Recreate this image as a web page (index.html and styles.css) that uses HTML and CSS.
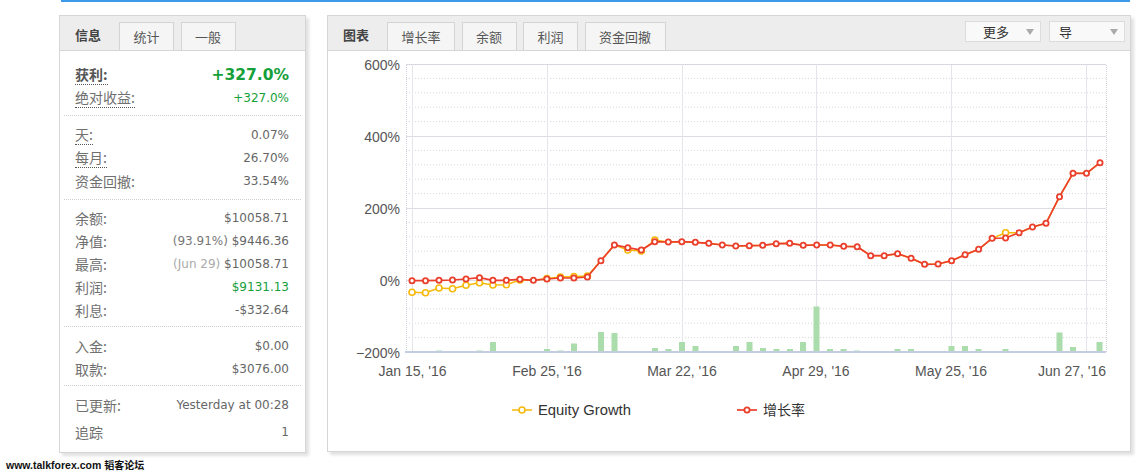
FILE: index.html
```html
<!DOCTYPE html>
<html>
<head>
<meta charset="utf-8">
<link rel="stylesheet" href="styles.css">
</head>
<body>
<div class="topbar"></div>
<div class="main">
  <section class="panel info">
    <div class="phead">
      <div class="tab active">信息</div>
      <div class="tab">统计</div>
      <div class="tab">一般</div>
    </div>
    <div class="pbody">
      <div class="grp g1">
        <div class="row"><span class="lbl ul strong">获利:</span><span class="val green bigval">+327.0%</span></div>
        <div class="row"><span class="lbl ul">绝对收益:</span><span class="val green">+327.0%</span></div>
      </div>
      <div class="sep"></div>
      <div class="grp g2">
        <div class="row"><span class="lbl ul">天:</span><span class="val">0.07%</span></div>
        <div class="row"><span class="lbl ul">每月:</span><span class="val">26.70%</span></div>
        <div class="row"><span class="lbl">资金回撤:</span><span class="val">33.54%</span></div>
      </div>
      <div class="sep"></div>
      <div class="grp g3">
        <div class="row"><span class="lbl">余额:</span><span class="val">$10058.71</span></div>
        <div class="row"><span class="lbl">净值:</span><span class="val"><span class="muted">(93.91%)</span> $9446.36</span></div>
        <div class="row"><span class="lbl">最高:</span><span class="val"><span class="faint">(Jun 29)</span> $10058.71</span></div>
        <div class="row"><span class="lbl">利润:</span><span class="val green">$9131.13</span></div>
        <div class="row"><span class="lbl">利息:</span><span class="val">-$332.64</span></div>
      </div>
      <div class="sep"></div>
      <div class="grp g4">
        <div class="row"><span class="lbl">入金:</span><span class="val">$0.00</span></div>
        <div class="row"><span class="lbl">取款:</span><span class="val">$3076.00</span></div>
      </div>
      <div class="sep"></div>
      <div class="grp g5">
        <div class="row"><span class="lbl">已更新:</span><span class="val">Yesterday at 00:28</span></div>
        <div class="row last"><span class="lbl">追踪</span><span class="val">1</span></div>
      </div>
    </div>
  </section>

  <section class="panel chart">
    <div class="phead">
      <div class="tab active">图表</div>
      <div class="tab">增长率</div>
      <div class="tab">余额</div>
      <div class="tab">利润</div>
      <div class="tab">资金回撤</div>
      <div class="tools">
        <div class="dd dd-more">更多<i class="caret"></i></div>
        <div class="dd dd-exp">导<i class="caret"></i></div>
      </div>
    </div>
    <div class="pbody">
      <svg class="plot" width="802" height="400" viewBox="0 0 802 400" xmlns="http://www.w3.org/2000/svg">
        <g transform="translate(-328 -51)">
          <path class="minor" d="M406 78.4H1106M406 92.8H1106M406 107.2H1106M406 121.6H1106M406 150.4H1106M406 164.8H1106M406 179.2H1106M406 193.6H1106M406 222.4H1106M406 236.8H1106M406 251.2H1106M406 265.6H1106M406 294.4H1106M406 308.8H1106M406 323.2H1106M406 337.6H1106"/>
          <path class="major" d="M406 64.5H1106M406 136.5H1106M406 208.5H1106M406 280.5H1106"/>
          <path class="vgrid" d="M412.5 64V352M547.5 64V352M682.5 64V352M816.5 64V352M951.5 64V352M1086.5 64V352"/>
          <path class="frame" d="M406.5 352V64.5H1106.5V352"/>
          <g class="bars">
            <rect x="436" y="350.5" width="6" height="1.5"/>
            <rect x="476.5" y="350.5" width="6" height="1.5"/>
            <rect x="490" y="342" width="6" height="10"/>
            <rect x="544" y="349" width="6" height="3"/>
            <rect x="557.5" y="350.5" width="6" height="1.5"/>
            <rect x="571" y="343.5" width="6" height="8.5"/>
            <rect x="598" y="332" width="6" height="20"/>
            <rect x="611.5" y="333" width="6" height="19"/>
            <rect x="652" y="348" width="6" height="4"/>
            <rect x="665.5" y="349" width="6" height="3"/>
            <rect x="679" y="342" width="6" height="10"/>
            <rect x="692.5" y="346" width="6" height="6"/>
            <rect x="733" y="346" width="6" height="6"/>
            <rect x="746.5" y="342" width="6" height="10"/>
            <rect x="760" y="348" width="6" height="4"/>
            <rect x="773.5" y="349" width="6" height="3"/>
            <rect x="787" y="349" width="6" height="3"/>
            <rect x="800" y="342" width="6" height="10"/>
            <rect x="813.5" y="306.5" width="6" height="45.5"/>
            <rect x="827" y="349" width="6" height="3"/>
            <rect x="840.5" y="349" width="6" height="3"/>
            <rect x="854" y="350.5" width="6" height="1.5"/>
            <rect x="894.5" y="349" width="6" height="3"/>
            <rect x="908" y="349" width="6" height="3"/>
            <rect x="948.5" y="346" width="6" height="6"/>
            <rect x="962" y="346" width="6" height="6"/>
            <rect x="975.5" y="349" width="6" height="3"/>
            <rect x="1002.5" y="349" width="6" height="3"/>
            <rect x="1056.5" y="332.5" width="6" height="19.5"/>
            <rect x="1070" y="347" width="6" height="5"/>
            <rect x="1096.5" y="342" width="6" height="10"/>
          </g>
          <path class="baseline" d="M405 352H1106"/>
          <g class="ylab">
            <text x="400" y="70">600%</text>
            <text x="400" y="142">400%</text>
            <text x="400" y="214">200%</text>
            <text x="400" y="286">0%</text>
            <text x="400" y="358">−200%</text>
          </g>
          <g class="xlab">
            <text x="412.5" y="376">Jan 15, '16</text>
            <text x="547" y="376">Feb 25, '16</text>
            <text x="682" y="376">Mar 22, '16</text>
            <text x="816" y="376">Apr 29, '16</text>
            <text x="951" y="376">May 25, '16</text>
            <text class="end" x="1106" y="376">Jun 27, '16</text>
          </g>
          <polyline class="eqline" points="412,292.3 425.5,292.7 439,288 452.5,288.7 466,285.3 479.5,282.7 492.9,285 506.4,284.7 519.9,280 533.4,280.3 546.9,278.5 560.4,277 573.9,276.5 587.4,276 600.9,260.7 614.4,245 627.8,250 641.3,251 654.8,240 668.3,242 681.8,241.7 695.3,242.3 708.8,243.3 722.3,245 735.8,246 749.3,245.7 762.7,245.3 776.2,243.7 789.7,243.3 803.2,245.3 816.7,245 830.2,245 843.7,246.3 857.2,246.7 870.7,255.7 884.2,255.7 897.6,253.7 911.1,258.3 924.6,264.3 938.1,264 951.6,260.7 965.1,254.7 978.6,249.3 992.1,238.3 1005.6,232.7 1019.1,232.7 1032.5,227 1046,223.3 1059.5,196.7 1073,173.3 1086.5,173.3 1100,162.7"/>
          <g class="eqdots">
            <circle cx="412" cy="292.3" r="3"/><circle cx="425.5" cy="292.7" r="3"/><circle cx="439" cy="288" r="3"/><circle cx="452.5" cy="288.7" r="3"/><circle cx="466" cy="285.3" r="3"/><circle cx="479.5" cy="282.7" r="3"/><circle cx="492.9" cy="285" r="3"/><circle cx="506.4" cy="284.7" r="3"/><circle cx="519.9" cy="280" r="3"/><circle cx="546.9" cy="278.5" r="3"/><circle cx="560.4" cy="277" r="3"/><circle cx="573.9" cy="276.5" r="3"/><circle cx="587.4" cy="276" r="3"/><circle cx="627.8" cy="250" r="3"/><circle cx="641.3" cy="251" r="3"/><circle cx="654.8" cy="240" r="3"/><circle cx="1005.6" cy="232.7" r="3"/>
          </g>
          <polyline class="grline" points="412,280.7 425.5,280.7 439,280.3 452.5,280 466,279 479.5,277.7 492.9,280.3 506.4,280.3 519.9,279.3 533.4,280.3 546.9,279 560.4,278 573.9,278 587.4,277 600.9,260.7 614.4,245 627.8,247.7 641.3,250 654.8,241.7 668.3,242 681.8,241.7 695.3,242.3 708.8,243.3 722.3,245 735.8,246 749.3,245.7 762.7,245.3 776.2,243.7 789.7,243.3 803.2,245.3 816.7,245 830.2,245 843.7,246.3 857.2,246.7 870.7,255.7 884.2,255.7 897.6,253.7 911.1,258.3 924.6,264.3 938.1,264 951.6,260.7 965.1,254.7 978.6,249.3 992.1,238.3 1005.6,238 1019.1,232.7 1032.5,227 1046,223.3 1059.5,196.7 1073,173.3 1086.5,173.3 1100,162.7"/>
          <g class="grdots">
            <circle cx="412" cy="280.7" r="2.6"/><circle cx="425.5" cy="280.7" r="2.6"/><circle cx="439" cy="280.3" r="2.6"/><circle cx="452.5" cy="280" r="2.6"/><circle cx="466" cy="279" r="2.6"/><circle cx="479.5" cy="277.7" r="2.6"/><circle cx="492.9" cy="280.3" r="2.6"/><circle cx="506.4" cy="280.3" r="2.6"/><circle cx="519.9" cy="279.3" r="2.6"/><circle cx="533.4" cy="280.3" r="2.6"/><circle cx="546.9" cy="279" r="2.6"/><circle cx="560.4" cy="278" r="2.6"/><circle cx="573.9" cy="278" r="2.6"/><circle cx="587.4" cy="277" r="2.6"/><circle cx="600.9" cy="260.7" r="2.6"/><circle cx="614.4" cy="245" r="2.6"/><circle cx="627.8" cy="247.7" r="2.6"/><circle cx="641.3" cy="250" r="2.6"/><circle cx="654.8" cy="241.7" r="2.6"/><circle cx="668.3" cy="242" r="2.6"/><circle cx="681.8" cy="241.7" r="2.6"/><circle cx="695.3" cy="242.3" r="2.6"/><circle cx="708.8" cy="243.3" r="2.6"/><circle cx="722.3" cy="245" r="2.6"/><circle cx="735.8" cy="246" r="2.6"/><circle cx="749.3" cy="245.7" r="2.6"/><circle cx="762.7" cy="245.3" r="2.6"/><circle cx="776.2" cy="243.7" r="2.6"/><circle cx="789.7" cy="243.3" r="2.6"/><circle cx="803.2" cy="245.3" r="2.6"/><circle cx="816.7" cy="245" r="2.6"/><circle cx="830.2" cy="245" r="2.6"/><circle cx="843.7" cy="246.3" r="2.6"/><circle cx="857.2" cy="246.7" r="2.6"/><circle cx="870.7" cy="255.7" r="2.6"/><circle cx="884.2" cy="255.7" r="2.6"/><circle cx="897.6" cy="253.7" r="2.6"/><circle cx="911.1" cy="258.3" r="2.6"/><circle cx="924.6" cy="264.3" r="2.6"/><circle cx="938.1" cy="264" r="2.6"/><circle cx="951.6" cy="260.7" r="2.6"/><circle cx="965.1" cy="254.7" r="2.6"/><circle cx="978.6" cy="249.3" r="2.6"/><circle cx="992.1" cy="238.3" r="2.6"/><circle cx="1005.6" cy="238" r="2.6"/><circle cx="1019.1" cy="232.7" r="2.6"/><circle cx="1032.5" cy="227" r="2.6"/><circle cx="1046" cy="223.3" r="2.6"/><circle cx="1059.5" cy="196.7" r="2.6"/><circle cx="1073" cy="173.3" r="2.6"/><circle cx="1086.5" cy="173.3" r="2.6"/><circle cx="1100" cy="162.7" r="2.6"/>
          </g>
          <g class="legend">
            <path class="eqline" d="M512 410H532"/>
            <circle class="eqdot" cx="522" cy="410" r="3"/>
            <text x="538" y="415">Equity Growth</text>
            <path class="grline" d="M737 410H757"/>
            <circle class="grdot" cx="747" cy="410" r="2.6"/>
            <text class="cjk" x="763" y="415">增长率</text>
          </g>
        </g>
      </svg>
    </div>
  </section>
</div>
<div class="wm">www.talkforex.com <span class="wmc">韬客论坛</span></div>
</body>
</html>
```

FILE: styles.css
```css
html, body {
  margin: 0;
  padding: 0;
  background: #fff;
}
body {
  font-family: "Noto Sans CJK SC", sans-serif;
  color: #666;
}
.topbar {
  margin-left: 61px;
  width: 1069px;
  height: 2px;
  background: #3c9ae8;
}
.main {
  display: flex;
  align-items: flex-start;
  gap: 21px;
  padding: 13px 0 0 59px;
}
.panel {
  box-sizing: border-box;
  border: 1px solid #d6d6d6;
  background: #fff;
  box-shadow: 3px 3px 3px rgba(0, 0, 0, 0.12);
}
.info {
  width: 247px;
  height: 438px;
}
.chart {
  width: 804px;
  height: 437px;
}
.phead {
  display: flex;
  align-items: flex-start;
  height: 34px;
  padding-left: 3px;
  background: #ededed;
  border-bottom: 1px solid #d6d6d6;
}
.tab {
  box-sizing: border-box;
  height: 28px;
  margin-top: 6px;
  margin-right: 6.5px;
  padding: 0 13.5px;
  border: 1px solid #d4d4d4;
  border-bottom: none;
  background: #f5f5f5;
  font-size: 13px;
  line-height: 28px;
  color: #555;
  white-space: nowrap;
}
.tab.active {
  border: none;
  background: transparent;
  padding: 0 12px;
  margin-right: 6px;
  font-weight: bold;
  color: #444;
  line-height: 25px;
}
.tools {
  display: flex;
  gap: 8px;
  margin-left: auto;
  margin-right: 5px;
  margin-top: 5px;
}
.dd {
  box-sizing: border-box;
  width: 76px;
  height: 21px;
  display: flex;
  align-items: center;
  border: 1px solid #dcdcdc;
  background: #f9f9f9;
  font-size: 13px;
  color: #333;
  padding-right: 6px;
}
.dd-more { padding-left: 17px; }
.dd-exp { padding-left: 9px; }
.caret {
  margin-left: auto;
  width: 0;
  height: 0;
  border-left: 4px solid transparent;
  border-right: 4px solid transparent;
  border-top: 6px solid #aaa;
}
.pbody {
  display: block;
}
.grp {
  padding: 7px 15px 5px 15px;
}
.g1 { padding-top: 12px; padding-bottom: 6px; }
.g2 { padding-top: 7px; padding-bottom: 7px; }
.g3 { padding-top: 6px; padding-bottom: 5px; }
.g4 { padding-top: 7px; padding-bottom: 5px; }
.g5 { padding-top: 7px; padding-bottom: 0; }
.row {
  display: flex;
  align-items: center;
  justify-content: space-between;
  height: 23px;
  padding-right: 1px;
}
.row.last {
  margin-top: 4px;
}
.lbl {
  font-family: "Noto Sans CJK SC", sans-serif;
  font-size: 14px;
  line-height: 20px;
  color: #707070;
}
.lbl.ul {
  border-bottom: 1px dotted #555;
  line-height: 19px;
  margin-top: 1px;
}
.lbl.strong {
  font-weight: bold;
  color: #555;
}
.val {
  font-family: "DejaVu Sans", sans-serif;
  font-size: 12px;
  color: #666;
  white-space: nowrap;
}
.val.green { color: #15a03a; }
.bigval {
  font-size: 15.5px;
  font-weight: bold;
}
.muted { color: #777; }
.faint { color: #aaa; }
.sep {
  height: 0;
  margin: 0 4px;
  border-top: 1px dotted #cfcfcf;
}
.plot {
  display: block;
}
.minor {
  fill: none;
  stroke: #d6d6da;
  stroke-width: 1;
  stroke-dasharray: 1 2;
}
.major {
  fill: none;
  stroke: #dcdee3;
  stroke-width: 1;
}
.vgrid {
  fill: none;
  stroke: #e3e5eb;
  stroke-width: 1;
}
.frame {
  fill: none;
  stroke: #d0d3dc;
  stroke-width: 1;
  stroke-dasharray: 1 1;
}
.bars rect {
  fill: #abdcab;
}
.baseline {
  stroke: #c3cde0;
  stroke-width: 2;
  fill: none;
}
.ylab text {
  font-family: "Liberation Sans", sans-serif;
  font-size: 14px;
  fill: #555;
  text-anchor: end;
}
.xlab text {
  font-family: "Liberation Sans", sans-serif;
  font-size: 14px;
  fill: #555;
  text-anchor: middle;
}
.xlab text.end {
  text-anchor: end;
}
.eqline {
  fill: none;
  stroke: #f6b90a;
  stroke-width: 1.5;
}
.eqdots circle, .eqdot {
  fill: #fff;
  stroke: #f6b90a;
  stroke-width: 1.6;
}
.grline {
  fill: none;
  stroke: #ea3f2c;
  stroke-width: 1.7;
}
.grdots circle, .grdot {
  fill: #fff;
  stroke: #ea3f2c;
  stroke-width: 1.8;
}
.legend text {
  font-family: "Liberation Sans", sans-serif;
  font-size: 14.8px;
  fill: #333;
}
.legend text.cjk {
  font-family: "Noto Sans CJK SC", sans-serif;
  font-size: 14px;
}
.wm {
  margin-top: 6px;
  padding-left: 6px;
  font-family: "Liberation Sans", sans-serif;
  font-weight: bold;
  font-size: 10.5px;
  line-height: 12px;
  color: #111;
}
.wmc {
  font-family: "Noto Sans CJK SC", sans-serif;
  font-size: 10px;
}
```
